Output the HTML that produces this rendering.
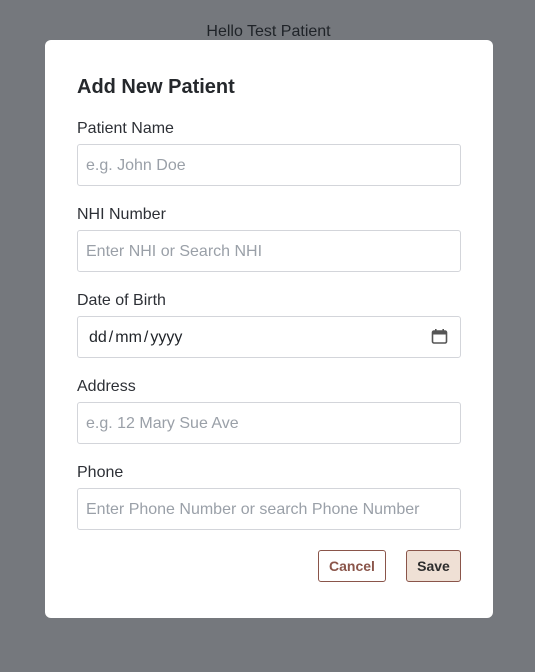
<!DOCTYPE html>
<html><head><meta charset="utf-8"><style>
body{margin:0;width:535px;height:672px;background:#75787d;font-family:"Liberation Sans",sans-serif;position:relative;overflow:hidden}
.hello{position:absolute;top:23px;left:0;width:537px;text-align:center;font-size:16px;color:#1f2328}
.modal{position:absolute;left:45px;top:40px;width:448px;height:578px;background:#fff;border-radius:6px}
h2{position:absolute;left:32px;top:36px;margin:0;font-size:20px;font-weight:bold;color:#25282c}
.lbl{position:absolute;left:32px;font-size:16px;color:#2d3036}
.inp{position:absolute;left:32px;width:382px;height:40px;border:1px solid #d3d5da;border-radius:3px;box-sizing:content-box}
.inp span{position:absolute;left:8px;top:12px;font-size:16px;color:#9aa0a8}
.btn{position:absolute;top:510px;height:32px;border:1px solid #8a554a;border-radius:3px;font-size:14px;font-weight:bold;text-align:center;line-height:31px;box-sizing:border-box}
</style></head><body>
<div class="hello">Hello Test Patient</div>
<div class="modal">
<h2>Add New Patient</h2>
<div class="lbl" style="top:80px">Patient Name</div>
<div class="inp" style="top:104px"><span>e.g. John Doe</span></div>
<div class="lbl" style="top:166px">NHI Number</div>
<div class="inp" style="top:190px"><span>Enter NHI or Search NHI</span></div>
<div class="lbl" style="top:252px">Date of Birth</div>
<div class="inp" style="top:276px"><span style="color:#1f2328;left:11px">dd<span style="position:static;color:inherit;margin:0 2px">/</span>mm<span style="position:static;color:inherit;margin:0 2px">/</span>yyyy</span>
<svg style="position:absolute;left:353px;top:11px" width="17" height="17" viewBox="0 0 17 17"><rect x="1.5" y="3" width="14" height="12" rx="1.5" fill="none" stroke="#555" stroke-width="1.6"/><rect x="1.5" y="3" width="14" height="3.5" fill="#555"/><rect x="4" y="1" width="1.6" height="3" fill="#555"/><rect x="11.4" y="1" width="1.6" height="3" fill="#555"/></svg></div>
<div class="lbl" style="top:338px">Address</div>
<div class="inp" style="top:362px"><span>e.g. 12 Mary Sue Ave</span></div>
<div class="lbl" style="top:424px">Phone</div>
<div class="inp" style="top:448px"><span>Enter Phone Number or search Phone Number</span></div>
<div class="btn" style="left:273px;width:68px;color:#8a554a;background:#fff">Cancel</div>
<div class="btn" style="left:361px;width:55px;color:#2d2d2d;background:#efe0d5">Save</div>
</div>
</body></html>
